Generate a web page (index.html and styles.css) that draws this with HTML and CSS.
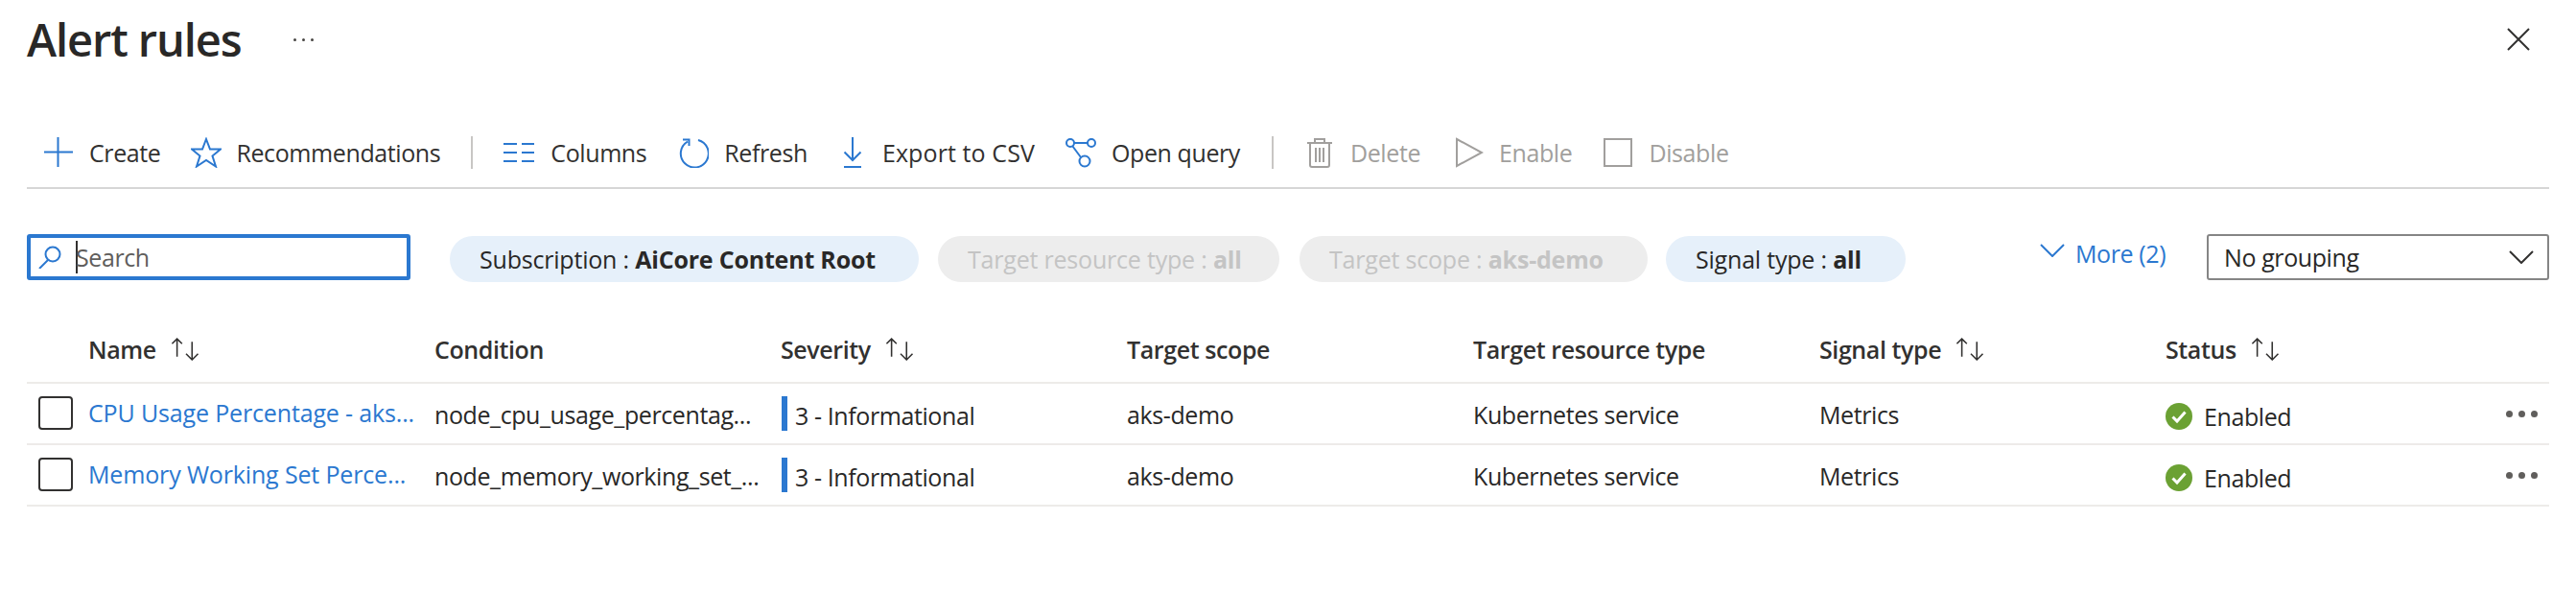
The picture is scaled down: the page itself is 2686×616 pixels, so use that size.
FILE: index.html
```html
<!DOCTYPE html>
<html lang="en">
  <head>
    <meta charset="UTF-8" />
    <title>Alert rules</title>
    <link rel="stylesheet" href="styles.css">
  </head>
  <body>
    <div class="title-bar">
      <h1 class="title">Alert rules</h1>
      <span class="title-more">
        <i></i><i></i><i></i>
      </span>
      <svg class="close" viewBox="0 0 24 24"><path d="M1 1L23 23M23 1L1 23" /></svg>
    </div>

    <div class="toolbar">
      <span class="tool tool-create">
        <svg class="icon" viewBox="0 0 32 32"><path d="M1 15.5H31M15.5 0V31" /></svg>Create
      </span>
      <span class="tool tool-recs">
        <svg class="icon" viewBox="0 0 32 32"><path d="M16 2L20 12.5H31L22.5 19.5L26 30.5L16 24L6 30.5L9.5 19.5L1 12.5H12Z" /></svg>Recommendations
      </span>
      <span class="sep"></span>
      <span class="tool tool-columns">
        <svg class="icon" viewBox="0 0 32 32"><path d="M0 7H14M19 7H33M0 16H14M19 16H33M0 25H14M19 25H33" /></svg>Columns
      </span>
      <span class="tool tool-refresh">
        <svg class="icon" viewBox="0 0 32 32"><path d="M10 4.5A14.5 14.5 0 1 0 21 3M5 2.5H11.5V9" /></svg>Refresh
      </span>
      <span class="tool tool-export">
        <svg class="icon" viewBox="0 0 32 32"><path d="M16 0V24M7.5 15.5L16 24L24.5 15.5M7 31H25" /></svg>Export to CSV
      </span>
      <span class="tool tool-query">
        <svg class="icon" viewBox="0 0 32 32"><circle cx="5" cy="6" r="4" /><circle cx="27" cy="6" r="4" /><circle cx="20" cy="25" r="5.5" /><path d="M9 6H23M7.5 9.500L16 21" /></svg>Open query
      </span>
      <span class="sep"></span>
      <span class="tool tool-delete disabled">
        <svg class="icon" viewBox="0 0 32 32"><path d="M3 6H29M6 6V29Q6 31 8 31H24Q26 31 26 29V6M11 6V2H21V6M12 11V26M16 11V26M20 11V26" /></svg>Delete
      </span>
      <span class="tool tool-enable disabled">
        <svg class="icon" viewBox="0 0 32 32"><path d="M4 2L30 16L4 30Z" /></svg>Enable
      </span>
      <span class="tool tool-disable disabled">
        <svg class="icon" viewBox="0 0 32 32"><path d="M2 2H30V30H2Z" /></svg>Disable
      </span>
    </div>

    <div class="filters">
      <div class="search">
        <svg class="search-icon" viewBox="0 0 24 24"><circle cx="15" cy="9" r="7.500" /><path d="M10 15L1 24" /></svg>
        <span class="caret"></span>
        <span class="search-text">Search</span>
      </div>
      <span class="pill pill-sub">Subscription : <b>AiCore Content Root</b></span>
      <span class="pill pill-off pill-type">Target resource type : <b>all</b></span>
      <span class="pill pill-off pill-scope">Target scope : <b>aks-demo</b></span>
      <span class="pill pill-signal">Signal type : <b>all</b></span>
      <span class="more">
        <svg class="chevron" viewBox="0 0 26 14"><path d="M1 1L13 13L25 1" /></svg>More (2)
      </span>
      <div class="grouping">
        <span>No grouping</span>
        <svg class="chevron" viewBox="0 0 26 14"><path d="M1 1L13 13L25 1" /></svg>
      </div>
    </div>

    <div class="grid head">
      <span></span>
      <span class="th">Name <svg class="sort" viewBox="0 0 32 24"><path d="M7 20V2M2 7L7 2L12 7M22 5V23M16 17L22 23L28 17" /></svg></span>
      <span class="th">Condition</span>
      <span class="th">Severity <svg class="sort" viewBox="0 0 32 24"><path d="M7 20V2M2 7L7 2L12 7M22 5V23M16 17L22 23L28 17" /></svg></span>
      <span class="th">Target scope</span>
      <span class="th">Target resource type</span>
      <span class="th">Signal type <svg class="sort" viewBox="0 0 32 24"><path d="M7 20V2M2 7L7 2L12 7M22 5V23M16 17L22 23L28 17" /></svg></span>
      <span class="th">Status <svg class="sort" viewBox="0 0 32 24"><path d="M7 20V2M2 7L7 2L12 7M22 5V23M16 17L22 23L28 17" /></svg></span>
    </div>

    <div class="grid row">
      <span class="check"></span>
      <a class="link">CPU Usage Percentage - aks...</a>
      <span>node_cpu_usage_percentag...</span>
      <span class="severity"><span>3 - Informational</span></span>
      <span>aks-demo</span>
      <span>Kubernetes service</span>
      <span>Metrics</span>
      <span class="status">
        <svg class="ok" viewBox="0 0 28 28"><circle cx="14" cy="14" r="14" /><path d="M7.500 14.500L12 19L20.500 9.500" /></svg>Enabled
      </span>
      <span class="row-more"><i></i><i></i><i></i></span>
    </div>

    <div class="grid row">
      <span class="check"></span>
      <a class="link">Memory Working Set Perce...</a>
      <span>node_memory_working_set_...</span>
      <span class="severity"><span>3 - Informational</span></span>
      <span>aks-demo</span>
      <span>Kubernetes service</span>
      <span>Metrics</span>
      <span class="status">
        <svg class="ok" viewBox="0 0 28 28"><circle cx="14" cy="14" r="14" /><path d="M7.500 14.500L12 19L20.500 9.500" /></svg>Enabled
      </span>
      <span class="row-more"><i></i><i></i><i></i></span>
    </div>
  </body>
</html>
```

FILE: styles.css
```css
body {
  font-family: "Open Sans", "Noto Sans", sans-serif;
  font-size: 25px;
  letter-spacing: -0.4px;
  color: #323130;
  background-color: #fff;
  margin: 0;
  padding: 0 28px;
}

svg {
  fill: none;
  flex: none;
}

/* title */
.title-bar {
  display: flex;
  align-items: center;
  height: 82px;
}

.title {
  margin: 0;
  font-size: 47px;
  font-weight: 600;
  letter-spacing: -1.1px;
  color: #292827;
}

.title-more {
  display: flex;
  gap: 6px;
  margin-left: 55px;
}

.title-more i {
  width: 3px;
  height: 3px;
  border-radius: 50%;
  background-color: #484644;
}

.close {
  width: 24px;
  height: 24px;
  margin-left: auto;
  margin-right: 20px;
  stroke: #323130;
  stroke-width: 2;
}

/* toolbar */
.toolbar {
  display: flex;
  align-items: center;
  height: 115px;
  border-bottom: 2px solid #d6d6d6;
  box-sizing: border-box;
  padding: 40px 0 0 17px;
  margin-bottom: 47px;
}

.tool {
  display: flex;
  align-items: center;
  gap: 16px;
  white-space: nowrap;
}

.icon {
  width: 32px;
  height: 32px;
  stroke: #2b78d0;
  stroke-width: 2;
}

.tool-recs {
  margin-left: 32px;
}

.tool-recs .icon {
  margin-right: -1px;
}

.tool-columns {
  gap: 17px;
}

.tool-refresh {
  margin-left: 33px;
}

.tool-export {
  margin-left: 31px;
  gap: 15px;
  letter-spacing: 0.1px;
}

.tool-query {
  margin-left: 32px;
  margin-right: 1px;
}

.tool-enable {
  margin-left: 34px;
}

.tool-disable {
  margin-left: 32px;
}

.disabled {
  color: #a19f9d;
}

.disabled .icon {
  stroke: #a19f9d;
}

.sep {
  width: 2px;
  height: 34px;
  margin: 0 32px;
  background-color: #c8c6c4;
}

/* filters */
.filters {
  display: flex;
  align-items: center;
  height: 48px;
  margin-bottom: 42px;
}

.search {
  display: flex;
  align-items: center;
  box-sizing: border-box;
  width: 400px;
  height: 48px;
  border: 4px solid #2b78d0;
  border-radius: 3px;
  padding-left: 8px;
}

.search-icon {
  width: 24px;
  height: 24px;
  stroke: #2b78d0;
  stroke-width: 2;
}

.caret {
  width: 2px;
  height: 34px;
  margin-left: 15px;
  background-color: #323130;
}

.search-text {
  margin-left: -2px;
  color: #605e5c;
}

.pill {
  display: flex;
  align-items: center;
  height: 48px;
  margin-top: 4px;
  border-radius: 24px;
  box-sizing: border-box;
  padding: 0 31px;
  background-color: #e6f0fa;
  color: #292827;
  letter-spacing: -0.2px;
  white-space: pre;
}

.pill b {
  font-weight: 700;
}

.pill-sub {
  width: 489px;
  margin-left: 41px;
}

.pill-type {
  width: 356px;
  margin-left: 20px;
}

.pill-scope {
  width: 363px;
  margin-left: 21px;
}

.pill-signal {
  width: 250px;
  margin-left: 19px;
}

.pill-off {
  background-color: #ededed;
  color: #c4c4c4;
}

.more {
  display: flex;
  align-items: center;
  gap: 11px;
  margin-left: 140px;
  margin-top: -8px;
  color: #2b78d0;
}

.more .chevron {
  width: 26px;
  height: 14px;
  margin-top: -6px;
  stroke: #2b78d0;
  stroke-width: 2;
}

.grouping {
  display: flex;
  align-items: center;
  justify-content: space-between;
  box-sizing: border-box;
  width: 357px;
  height: 48px;
  margin-left: auto;
  border: 2px solid #858585;
  border-radius: 3px;
  padding: 0 14px 0 16px;
  color: #292827;
}

.grouping .chevron {
  width: 26px;
  height: 14px;
  stroke: #323130;
  stroke-width: 2;
}

/* table */
.grid {
  display: grid;
  grid-template-columns: 64px repeat(6, 361px) 1fr;
  align-items: center;
  position: relative;
  white-space: nowrap;
}

.head {
  height: 66px;
  border-bottom: 2px solid #edebe9;
  box-sizing: border-box;
  padding-bottom: 5px;
}

.th {
  display: flex;
  align-items: center;
  gap: 14px;
  font-weight: 600;
  color: #323130;
}

.sort {
  width: 34px;
  height: 25px;
  stroke: #323130;
  stroke-width: 1.500;
}

.row {
  height: 64px;
  border-bottom: 2px solid #edebe9;
  box-sizing: border-box;
  color: #292827;
  padding-top: 2px;
}

.check {
  box-sizing: border-box;
  width: 36px;
  height: 35px;
  margin-left: 12px;
  margin-top: -4px;
  border: 2px solid #323130;
  border-radius: 4px;
}

.link {
  color: #2b78d0;
  margin-top: -4px;
  letter-spacing: -0.15px;
}

.severity {
  display: flex;
  align-items: center;
  height: 36px;
  margin-left: 1px;
  margin-top: -2px;
  border-left: 6px solid #2b78d0;
  padding-left: 8px;
}

.severity span {
  margin-top: 4px;
}

.status {
  display: flex;
  align-items: center;
  gap: 12px;
  margin-top: 4px;
}

.ok {
  width: 28px;
  height: 28px;
}

.ok circle {
  fill: #6ba133;
}

.ok path {
  stroke: #fff;
  stroke-width: 3;
}

/* lies over the end of the status cell */
.row-more {
  position: absolute;
  right: 12px;
  top: 28px;
  display: flex;
  gap: 6px;
}

.row-more i {
  width: 7px;
  height: 7px;
  border-radius: 50%;
  background-color: #605e5c;
}
```
